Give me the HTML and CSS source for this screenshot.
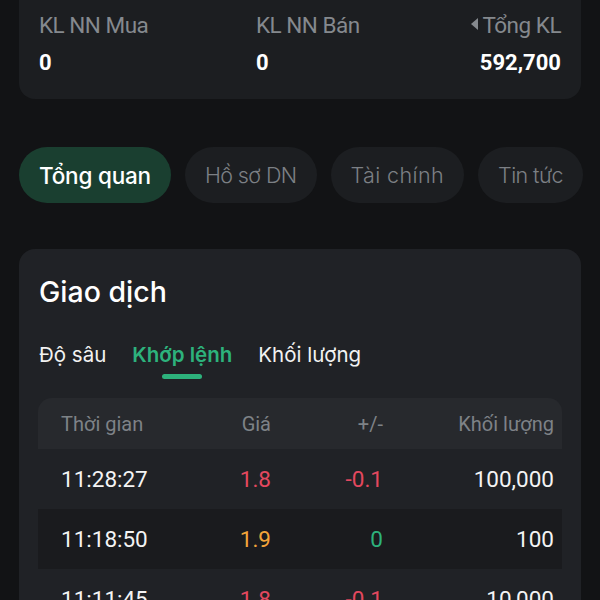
FILE: index.html
```html
<!DOCTYPE html>
<html lang="vi">
<head>
  <meta charset="UTF-8" />
  <meta name="viewport" content="width=device-width, initial-scale=1.0" />
  <title>Giao dịch</title>
  <link rel="stylesheet" href="styles.css">
</head>
<body>
  <div class="page">
    <div class="summary">
      <span class="label">KL NN Mua</span>
      <span class="label">KL NN Bán</span>
      <span class="label right"><i class="caret"></i>Tổng KL</span>
      <span class="value">0</span>
      <span class="value">0</span>
      <span class="value right">592,700</span>
    </div>

    <div class="pills">
      <div class="pill active">Tổng quan</div>
      <div class="pill">Hồ sơ DN</div>
      <div class="pill wide">Tài chính</div>
      <div class="pill">Tin tức</div>
    </div>

    <div class="card">
      <h2>Giao dịch</h2>
      <div class="tabs">
        <span class="tab">Độ sâu</span>
        <span class="tab on">Khớp lệnh</span>
        <span class="tab">Khối lượng</span>
      </div>

      <div class="table">
        <div class="row head">
          <span>Thời gian</span>
          <span class="num">Giá</span>
          <span class="num">+/-</span>
          <span class="num">Khối lượng</span>
        </div>
        <div class="row">
          <span>11:28:27</span>
          <span class="num down">1.8</span>
          <span class="num down">-0.1</span>
          <span class="num">100,000</span>
        </div>
        <div class="row alt">
          <span>11:18:50</span>
          <span class="num ref">1.9</span>
          <span class="num up">0</span>
          <span class="num">100</span>
        </div>
        <div class="row">
          <span>11:11:45</span>
          <span class="num down">1.8</span>
          <span class="num down">-0.1</span>
          <span class="num">10,000</span>
        </div>
      </div>
    </div>
  </div>
</body>
</html>
```

FILE: styles.css
```css
* {
  box-sizing: border-box;
  margin: 0;
  padding: 0;
}
body {
  background: #121315;
  color: #fff;
  font-family: Roboto, 'Noto Sans', sans-serif;
  overflow: hidden;
}
.page {
  padding: 0 19px;
  height: 600px;
  overflow: hidden;
}
.summary {
  display: grid;
  grid-template-columns: 217px 1fr auto;
  row-gap: 12px;
  background: #1c1e21;
  border-radius: 0 0 16px 16px;
  padding: 12px 20px 23px;
}
.label {
  font-size: 22.5px;
  line-height: 26px;
  color: #85898e;
  letter-spacing: -0.5px;
}
.value {
  font-size: 22px;
  line-height: 26px;
  font-weight: 700;
}
.right {
  text-align: right;
}
.caret {
  display: inline-block;
  width: 0;
  height: 0;
  border-top: 6px solid transparent;
  border-bottom: 6px solid transparent;
  border-right: 7px solid #85898e;
  margin-right: 4px;
  vertical-align: 3px;
}
.pills {
  display: flex;
  gap: 14px;
  margin-top: 48px;
  white-space: nowrap;
}
.pill {
  height: 56px;
  line-height: 57px;
  padding: 0 20px;
  border-radius: 28px;
  background: #1c1e21;
  color: #7c8085;
  font-family: Inter, sans-serif;
  font-size: 21.5px;
  font-weight: 300;
  letter-spacing: -0.6px;
  flex-shrink: 0;
}
.pill.wide {
  letter-spacing: 0.4px;
}
.pill.active {
  background: #1a3f30;
  color: #fff;
  font-size: 22.5px;
  font-weight: 500;
  letter-spacing: -0.2px;
}
.card {
  margin-top: 46px;
  background: #202226;
  border-radius: 16px;
  padding: 25px 19px 0;
  height: 400px;
}
.card h2 {
  font-family: Inter, sans-serif;
  font-size: 28.5px;
  font-weight: 500;
  line-height: 36px;
  padding-left: 1px;
}
.tabs {
  display: flex;
  gap: 26px;
  margin-top: 32px;
  padding-left: 1px;
}
.tab {
  position: relative;
  font-family: Inter, sans-serif;
  font-size: 20.5px;
  line-height: 26px;
  color: #f2f2f2;
}
.tab.on {
  color: #2db27c;
  font-weight: 600;
}
.tab.on::after {
  content: "";
  position: absolute;
  left: 50%;
  bottom: -11px;
  width: 40px;
  height: 5px;
  margin-left: -20px;
  border-radius: 3px;
  background: #2db27c;
}
.table {
  margin-top: 30px;
}
.row {
  display: grid;
  grid-template-columns: 130px 80px 112px 171px;
  align-items: center;
  height: 60px;
  padding: 0 7px 0 23px;
  font-size: 22.5px;
  color: #f4f4f4;
}
.row.head {
  height: 51px;
  background: #27292d;
  border-radius: 14px 14px 0 0;
  font-size: 20px;
  color: #7e8287;
}
.row.alt {
  background: #1a1b1e;
}
.num {
  text-align: right;
}
.down { color: #e4485f; }
.up { color: #2db27c; }
.ref { color: #f3a53a; }
```
